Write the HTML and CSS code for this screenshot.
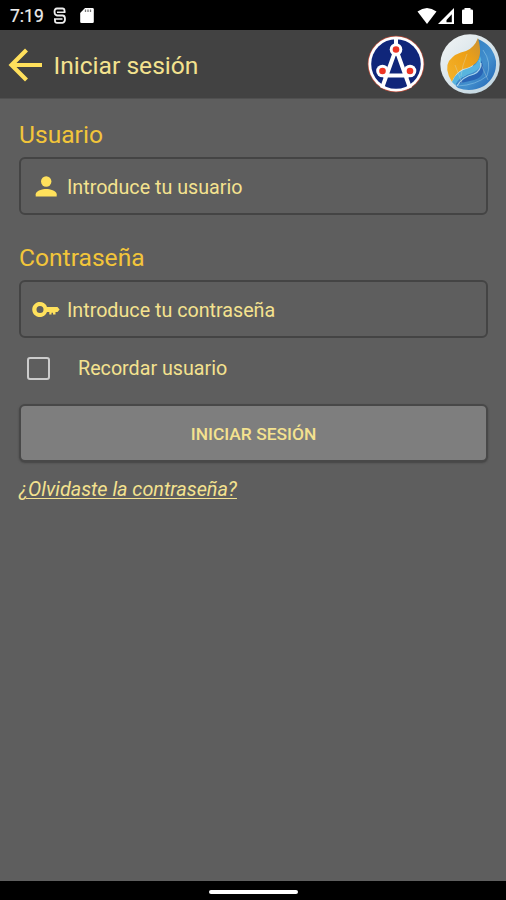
FILE: index.html
```html
<!DOCTYPE html>
<html lang="es">
<head>
<meta charset="utf-8">
<title>Iniciar sesión</title>
<link rel="stylesheet" href="styles.css">
</head>
<body>
<div class="screen">
  <div class="status">
    <span class="time">7:19</span>
    <svg class="st-sync" width="14" height="18" viewBox="0 0 14 18" fill="none" stroke="#eee" stroke-width="1.800"><path d="M11.500 5V3.500Q11.500 1.500 9.500 1.500H4Q1.500 1.500 1.500 4.800T4 8.500H9.500Q12 8.500 12 12T9.500 15.800H4Q2 15.800 2 14V12"/><path d="M4 5.200H12.500M1 12h8.500" stroke-width="1.600"/></svg>
    <svg class="st-card" width="14" height="17" viewBox="0 0 14 17"><path fill="#fff" d="M5 1h7.500q1.300 0 1.300 1.300v12.400q0 1.300-1.300 1.300h-11Q.2 16 .2 14.700V6z"/><path stroke="#777" stroke-width="1.300" d="M5.500 2.500v2.500M8 2.500v2.500M10.500 2.500v2.500"/></svg>
    <svg class="st-right" width="58" height="18" viewBox="0 0 58 18" fill="#fff"><path d="M.5 4.500Q10-2.500 19.500 4.500L10 17z"/><path fill-rule="evenodd" d="M37 1v16H21zM34.800 7.300L29.500 13v2.300h5.300z"/><path d="M47.500 2.500V1h6v1.500h1.200q1.300 0 1.300 1.300v11.900q0 1.300-1.300 1.300h-8.400q-1.300 0-1.300-1.300V3.800q0-1.300 1.300-1.300z"/></svg>
  </div>
  <header class="bar">
    <svg class="back" width="34" height="34" viewBox="0 0 34 34" fill="none" stroke="#ffe05c" stroke-width="4.200"><path d="M34 17H4M18.500 2L3.500 17l15 15"/></svg>
    <h1>Iniciar sesión</h1>
    <svg class="logo-a" width="58" height="58" viewBox="0 0 58 58">
      <circle cx="29" cy="29" r="28.300" fill="#b94c3b"/><circle cx="29" cy="29" r="27.600" fill="#fff"/><circle cx="29" cy="29" r="24.800" fill="#10267a"/>
      <path d="M29 3v10M29 14L15 53M29 14l14 39M16 40.500h26" fill="none" stroke="#fff" stroke-width="4"/>
      <g fill="#fff"><circle cx="29" cy="14.500" r="6.300"/><circle cx="15.500" cy="36" r="6.300"/><circle cx="43" cy="36" r="6.300"/></g>
      <g fill="#ed3525"><circle cx="29" cy="14.500" r="3.300"/><circle cx="15.500" cy="36" r="3.300"/><circle cx="43" cy="36" r="3.300"/></g>
    </svg>
    <svg class="logo-b" width="60" height="60" viewBox="0 0 60 60">
      <defs><linearGradient id="rim" x1="0" y1="0" x2="1" y2="1"><stop offset="0" stop-color="#f3f5f5"/><stop offset="1" stop-color="#bcd3df"/></linearGradient>
      <linearGradient id="gold" x1="0" y1="1" x2="1" y2="0"><stop offset="0" stop-color="#f5b42c"/><stop offset=".6" stop-color="#eda016"/><stop offset="1" stop-color="#c99235"/></linearGradient>
      <linearGradient id="blue" x1="0" y1="0" x2="1" y2="1"><stop offset="0" stop-color="#2475bd"/><stop offset=".6" stop-color="#438fcd"/><stop offset="1" stop-color="#1e62b4"/></linearGradient></defs>
      <circle cx="30" cy="30" r="29.700" fill="url(#rim)"/>
      <path d="M38 5Q53 11 56 27Q57 43 44 52Q31 59 18 54Q12 50 20 44Q37 39 38 5z" fill="url(#blue)"/>
      <path d="M38 4Q43 22 36 29Q30 34 23 35Q15 39 12 48Q4 35 9 27Q15 19 26 17Q34 14 38 4z" fill="url(#gold)"/>
      <path d="M12 48Q16 37 29 34Q38 31 40 22Q45 33 32 39Q20 42 15 51z" fill="#58b4de"/>
      <path d="M17 50Q21 44 33 41Q42 37 41 26Q48 42 34 46Q25 48 17 50z" fill="#2864b5"/>
      <path d="M17 52Q22 43 34 40Q41 37 41 29" fill="none" stroke="#c5e8f6" stroke-width="1.200" opacity=".8"/>
      <path d="M43 16Q52 28 47 42Q36 51 18 52" fill="none" stroke="#afe0f5" stroke-width="1" opacity=".4"/>
      <path d="M15 31l7 18M27 20q-5 12-6 22M39 26l9 20" fill="none" stroke="#d7e3dc" stroke-width=".8" opacity=".4"/>
    </svg>
  </header>
  <main>
    <label class="label" for="user">Usuario</label>
    <div class="field" id="user">
      <svg width="30" height="24" viewBox="0 0 30 24" fill="#ffe15c"><circle cx="15.200" cy="6.500" r="5.200"/><path d="M4.700 21.500v-2.300c0-3.500 7-5.300 10.500-5.300s10.500 1.800 10.500 5.300v2.300z"/></svg>
      <span>Introduce tu usuario</span>
    </div>
    <label class="label second" for="pass">Contraseña</label>
    <div class="field" id="pass">
      <svg width="30" height="24" viewBox="0 0 30 24" fill="#ffe15c"><path fill-rule="evenodd" d="M16 9A7.600 7.600 0 1 0 16 14H18.300V16.500h2.200v-1.800h1.500V16.500H24.500v-2.500h2L28.600 11.500 26.500 9zM9 8a3.500 3.500 0 1 1 0 7 3.500 3.500 0 0 1 0-7z"/></svg>
      <span>Introduce tu contraseña</span>
    </div>
    <div class="remember"><span class="box"></span><span class="rtext">Recordar usuario</span></div>
    <button class="login"><span>INICIAR SESIÓN</span></button>
    <a class="forgot">¿Olvidaste la contraseña?</a>
  </main>
  <footer class="nav"><span class="pill"></span></footer>
</div>
</body>
</html>
```
FILE: styles.css
```css
* { box-sizing: border-box; }
body { margin: 0; background: #5e5e5e; font-family: Roboto, sans-serif; color: #f4e28f; }
.screen { width: 506px; height: 900px; display: flex; flex-direction: column; overflow: hidden; }
.status { height: 30px; background: #000; display: flex; align-items: center; padding: 1px 31px 0 10px; color: #eee; flex: none; }
.time { font-size: 17.5px; width: 43px; line-height: 20px; white-space: nowrap; -webkit-text-stroke: .2px #eee; }
.st-card { margin-left: 13px; }
.st-right { margin-left: auto; }
.bar { height: 69px; background: #424242; border-bottom: 1px solid #505050; display: flex; align-items: center; padding: 0 6px 0 8px; flex: none; }
h1 { margin: 0 0 0 11.5px; font-size: 24.6px; font-weight: 400; line-height: 30px; white-space: nowrap; padding-top: 3px; }
.back { margin-top: 1px; }
.logo-a { margin-left: auto; }
.logo-b { margin-left: 15px; }
main { flex: 1; padding: 21px 18px 0 19px; display: flex; flex-direction: column; }
.label { height: 30px; line-height: 29px; font-size: 24.6px; color: #f2c53a; margin-bottom: 7px; }
.second { margin-top: 28px; }
.field { height: 58px; border: 2px solid #444; border-radius: 6px; display: flex; align-items: center; padding: 2px 0 0 10px; font-size: 19.7px; white-space: nowrap; }
.field svg { margin-right: 6px; }
.remember { height: 60px; display: flex; align-items: center; padding-left: 8px; font-size: 19.7px; }
.box { width: 23px; height: 23px; border: 2px solid #ccc; border-radius: 3px; }
.rtext { margin-left: 28px; }
.login { height: 58px; margin: 6px 0 0; padding: 2px 0 0; border: 2px solid #484848; border-radius: 6px; background: #7e7e7e; box-shadow: 0 1px 2px #444; color: #f4e28f; font: 500 17.4px Roboto, sans-serif; }
.forgot { margin-top: 15px; line-height: 26px; font-size: 19.8px; font-style: italic; text-decoration: underline; text-decoration-thickness: 1px; text-underline-offset: 2px; white-space: nowrap; align-self: flex-start; }
.nav { height: 19px; background: #000; display: flex; justify-content: center; align-items: center; flex: none; padding-top: 3px; }
.pill { width: 89px; height: 4px; border-radius: 2px; background: #fff; }
```
